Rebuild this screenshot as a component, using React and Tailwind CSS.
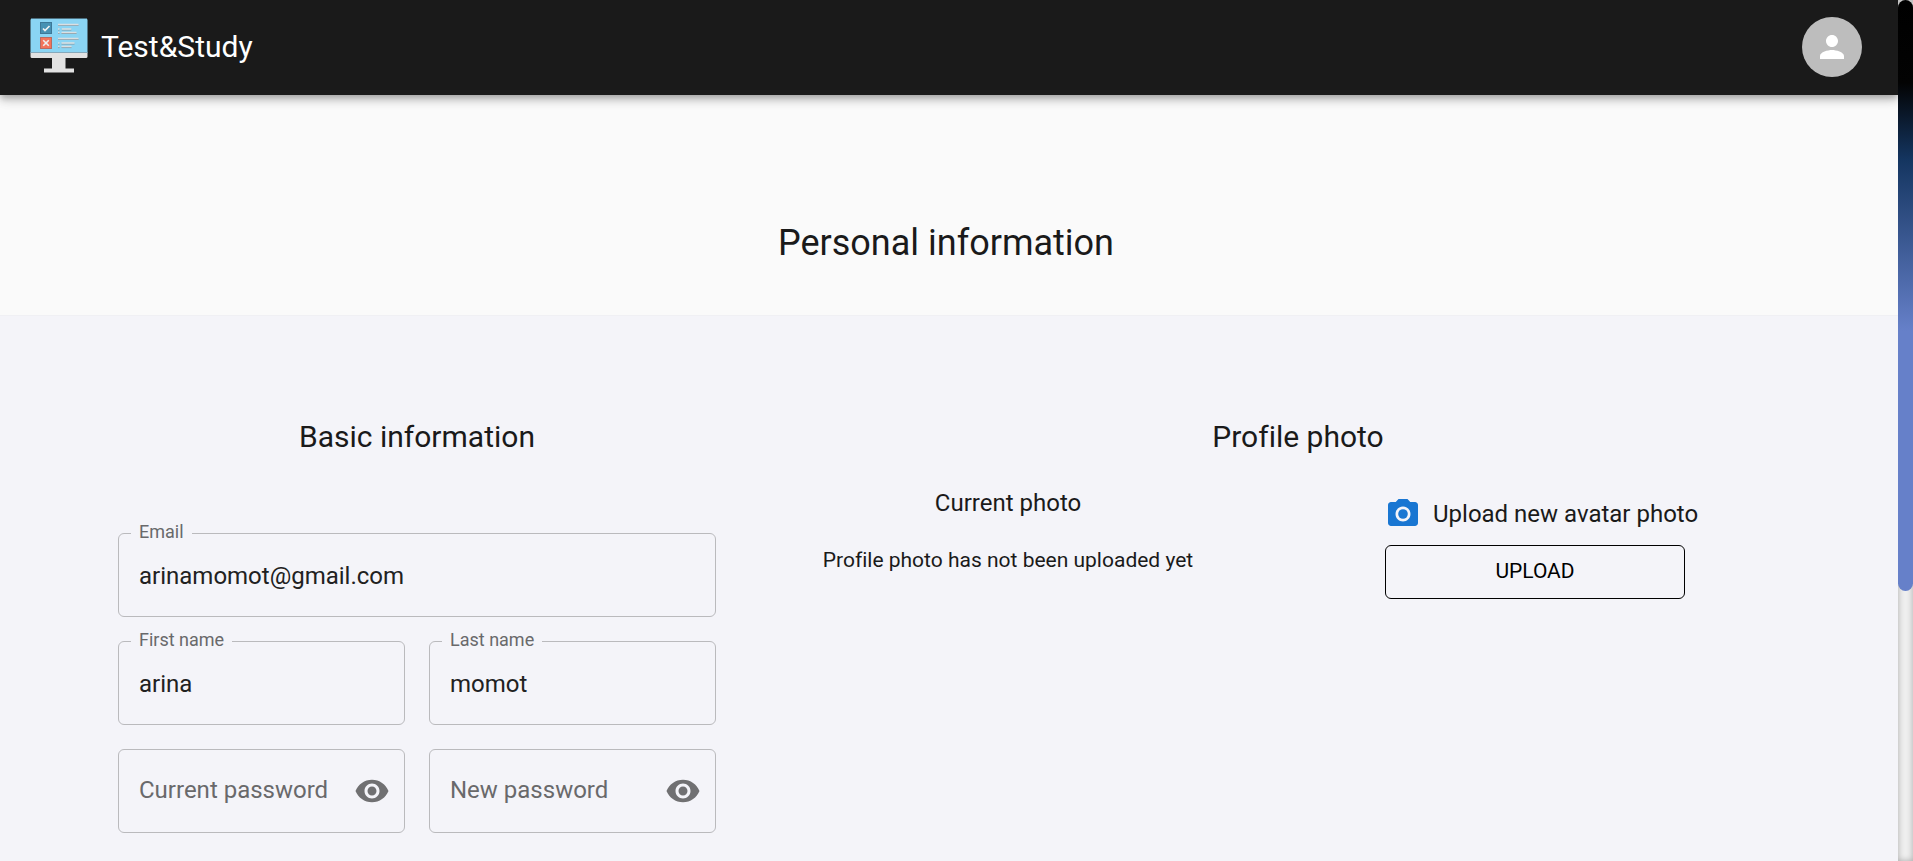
import React from "react";

const shadow =
  "shadow-[0_3px_6px_-1px_rgba(0,0,0,0.2),0_6px_8px_0_rgba(0,0,0,0.14),0_1px_15px_0_rgba(0,0,0,0.12)]";

function Logo() {
  return (
    <svg className="h-[58px] w-[58px]" viewBox="0 0 58 58" aria-hidden="true">
      <path d="M.5 2a1.500 1.500 0 0 1 1.500-1.500h54a1.500 1.500 0 0 1 1.500 1.500v33H.5z" fill="#8ad4f3" />
      <path d="M1 .5h56" stroke="#4c6f7f" strokeWidth="1" />
      <path d="M.5 35h57v3.500a1.500 1.500 0 0 1-1.500 1.500H2a1.500 1.500 0 0 1-1.500-1.500z" fill="#e2e2e2" />
      <path d="M.5 34h57v1H.5z" fill="#86a9bb" />
      <path d="M22 40h13.500v10.500H44V54.500H14v-4h8z" fill="#e2e2e2" />
      <rect x="10.500" y="4.500" width="11" height="11" fill="#4791b3" stroke="#3d7897" />
      <path d="M13 10.500l2 2 4.500-4.500" fill="none" stroke="#f2f2f2" strokeWidth="1.700" />
      <rect x="10.500" y="19.500" width="11" height="11" fill="#f2735a" stroke="#b96a60" />
      <path d="M13.200 22.200l5.600 5.600m0-5.600l-5.600 5.600" fill="none" stroke="#eee" strokeWidth="1.600" />
      <path
        d="M28 7.400h20.500M28 12h1.500m2.300 0h9.500M28 15.500h1.500m2 0h15M28 21.400h20.500M28 26h1.500m2 0h13M28 29.600h1.500m2 0h10"
        fill="none"
        stroke="#8298a3"
        strokeWidth="1"
      />
      <path
        d="M28 6.400h20.500M28 11h1.500m2.300 0h9.500M28 14.500h1.500m2 0h15M28 20.400h20.500M28 25h1.500m2 0h13M28 28.600h1.500m2 0h10"
        fill="none"
        stroke="#dadfe2"
        strokeWidth="1.500"
      />
    </svg>
  );
}

function Field({ id, label, value, type = "text" }) {
  return (
    <div className="relative min-w-0">
      <input
        id={id}
        type={type}
        defaultValue={value}
        className="h-[84px] w-full rounded-md border border-[#bababd] bg-transparent px-5 pt-0.5 text-2xl text-[#212121] outline-none"
      />
      <label
        htmlFor={id}
        className="absolute -top-[13px] left-[13px] bg-[#f4f4f9] px-2 text-lg leading-6 text-[#69696b]"
      >
        {label}
      </label>
    </div>
  );
}

function PasswordField({ id, label }) {
  return (
    <div className="flex h-[84px] min-w-0 items-center rounded-md border border-[#bababd] pr-3.5 pl-5">
      <input
        id={id}
        type="password"
        placeholder={label}
        aria-label={label}
        className="min-w-0 flex-1 bg-transparent pb-0.5 text-2xl text-[#212121] outline-none placeholder:text-[#69696b]"
      />
      <button type="button" aria-label="Show password" className="shrink-0">
        <svg className="h-9 w-9" viewBox="0 0 24 24" fill="#707072" aria-hidden="true">
          <path d="M12 4.500C7 4.500 2.730 7.610 1 12c1.730 4.390 6 7.500 11 7.500s9.270-3.110 11-7.500c-1.730-4.390-6-7.500-11-7.500M12 17c-2.760 0-5-2.240-5-5s2.240-5 5-5 5 2.240 5 5-2.240 5-5 5m0-8c-1.660 0-3 1.340-3 3s1.340 3 3 3 3-1.340 3-3-1.340-3-3-3" />
        </svg>
      </button>
    </div>
  );
}

export default function App() {
  return (
    <div className="flex h-screen bg-[#fafafa] font-[Roboto,sans-serif] text-[#1a1a1a] [font-variant-ligatures:none]">
      <div className="flex min-w-0 flex-1 flex-col overflow-hidden">
        <header
          className={`relative flex h-[95px] shrink-0 items-center justify-between bg-[#1a1a1a] pr-9 pb-px pl-[30px] text-white ${shadow}`}
        >
          <a href="#home" className="flex items-center gap-[13px] text-3xl">
            <Logo />
            <span className="pb-px">Test&amp;Study</span>
          </a>
          <button
            type="button"
            aria-label="Account"
            className="flex h-[60px] w-[60px] items-center justify-center rounded-full bg-[#bdbdbd]"
          >
            <svg className="h-9 w-9" viewBox="0 0 24 24" fill="#fff" aria-hidden="true">
              <path d="M12 12c2.210 0 4-1.790 4-4s-1.790-4-4-4-4 1.790-4 4 1.790 4 4 4m0 2c-2.670 0-8 1.340-8 4v2h16v-2c0-2.660-5.330-4-8-4" />
            </svg>
          </button>
        </header>

        <section className="flex h-[220px] shrink-0 items-end justify-center pr-1.5 pb-12">
          <h1 className="text-4xl leading-[48px]">Personal information</h1>
        </section>

        <main className="grid flex-1 grid-cols-[600fr_1160fr] border-t border-[#f0f0f4] bg-[#f4f4f9] pt-[97px] pr-5 pl-[118px]">
          <form className="pr-0.5" onSubmit={(e) => e.preventDefault()}>
            <h2 className="text-center text-3xl leading-[48px]">Basic information</h2>
            <div className="mt-[72px] grid grid-cols-2 gap-6">
              <div className="col-span-2">
                <Field id="email" label="Email" value="arinamomot@gmail.com" type="email" />
              </div>
              <Field id="first" label="First name" value="arina" />
              <Field id="last" label="Last name" value="momot" />
              <PasswordField id="current" label="Current password" />
              <PasswordField id="new" label="New password" />
            </div>
          </form>

          <section>
            <h2 className="text-center text-3xl leading-[48px]">Profile photo</h2>
            <div className="grid grid-cols-2 pt-6">
              <div className="text-center">
                <h3 className="text-2xl leading-9">Current photo</h3>
                <p className="mt-[23px] text-[21px] leading-8">Profile photo has not been uploaded yet</p>
              </div>
              <div className="pt-[11px] pl-[87px]">
                <div className="flex items-center gap-3">
                  <svg className="h-9 w-9" viewBox="0 0 24 24" fill="#1976d2" aria-hidden="true">
                    <circle cx="12" cy="12" r="3.200" />
                    <path d="M9 2 7.170 4H4c-1.100 0-2 .9-2 2v12c0 1.100.9 2 2 2h16c1.100 0 2-.9 2-2V6c0-1.100-.9-2-2-2h-3.170L15 2zm3 15c-2.760 0-5-2.240-5-5s2.240-5 5-5 5 2.240 5 5-2.240 5-5 5" />
                  </svg>
                  <span className="text-2xl leading-9">Upload new avatar photo</span>
                </div>
                <button
                  type="button"
                  className="mt-[13px] h-[54px] w-[300px] rounded-md border border-black text-[21px] text-black"
                >
                  UPLOAD
                </button>
              </div>
            </div>
          </section>
        </main>
      </div>

      <div className="w-[15px] shrink-0 bg-[#efefef] shadow-[inset_0_0_6px_rgba(0,0,0,0.3)]" aria-hidden="true">
        <div className="h-[68.6%] rounded-[10px] bg-[linear-gradient(#000_0%,#030303_14%,#143560_27%,#6680c9_56%)]" />
      </div>
    </div>
  );
}
